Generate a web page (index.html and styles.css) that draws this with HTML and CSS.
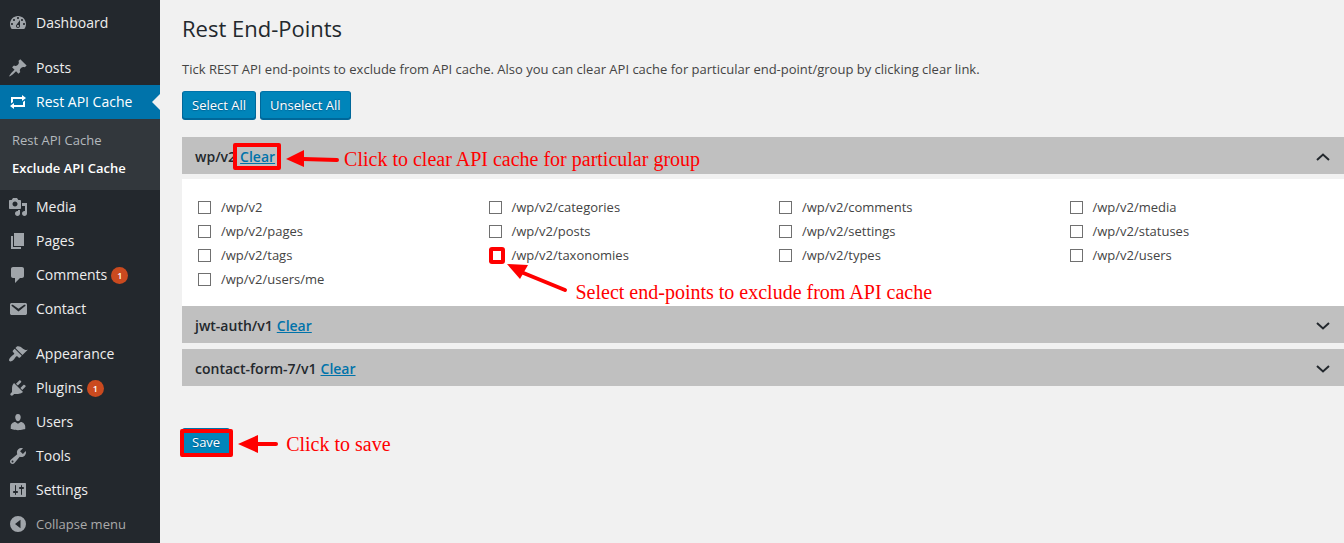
FILE: index.html
```html
<!DOCTYPE html>
<html lang="en">
<head>
<meta charset="utf-8">
<title>Rest End-Points</title>
<link rel="stylesheet" href="styles.css">
</head>
<body>
<div class="layout">
  <nav class="menu" aria-label="Main menu">
    <a class="item" href="#"><svg class="icon" viewBox="0 0 20 20"><path d="M3.76 16h12.48c1.1-1.37 1.76-3.11 1.76-5 0-4.42-3.58-8-8-8s-8 3.58-8 8c0 1.89.66 3.63 1.76 5zM10 4c.55 0 1 .45 1 1s-.45 1-1 1-1-.45-1-1 .45-1 1-1zM6 6c.55 0 1 .45 1 1s-.45 1-1 1-1-.45-1-1 .45-1 1-1zm8 0c.55 0 1 .45 1 1s-.45 1-1 1-1-.45-1-1 .45-1 1-1zm-5.37 5.55L12 7v6c0 1.1-.9 2-2 2s-2-.9-2-2c0-.57.24-1.08.63-1.45zM4 10c.55 0 1 .45 1 1s-.45 1-1 1-1-.45-1-1 .45-1 1-1zm12 0c.55 0 1 .45 1 1s-.45 1-1 1-1-.45-1-1 .45-1 1-1zm-5 3c0-.55-.45-1-1-1s-1 .45-1 1 .45 1 1 1 1-.45 1-1z"/></svg>Dashboard</a>
    <a class="item group-start" href="#"><svg class="icon" viewBox="0 0 20 20"><path d="M10.44 3.02l1.82-1.82 6.36 6.35-1.83 1.82c-1.05-.68-2.48-.57-3.41.36l-.75.75c-.92.93-1.04 2.35-.35 3.41l-1.83 1.82-2.41-2.41-2.8 2.79c-.42.42-3.38 2.71-3.8 2.29s1.86-3.39 2.28-3.81l2.79-2.79L4.1 9.36l1.83-1.82c1.05.69 2.48.57 3.4-.36l.75-.75c.93-.92 1.05-2.35.36-3.41z"/></svg>Posts</a>
    <a class="item current" href="#"><svg class="icon" viewBox="0 0 20 20"><path d="M5 7v3l-2 1.500V5h11V3l4 3.010L14 9V7H5zm10 6v-3l2-1.500V15H6v2l-4-3.010L6 11v2h9z"/></svg>Rest API Cache</a>
    <div class="submenu">
      <a class="subitem" href="#">Rest API Cache</a>
      <a class="subitem active" href="#" aria-current="page">Exclude API Cache</a>
    </div>
    <a class="item" href="#"><svg class="icon" viewBox="0 0 20 20"><path d="M13 11V4c0-.55-.45-1-1-1h-1.670L9 1H5L3.670 3H2c-.55 0-1 .45-1 1v7c0 .55.45 1 1 1h10c.55 0 1-.45 1-1zM7 4.500c1.380 0 2.500 1.120 2.500 2.500S8.380 9.500 7 9.500 4.500 8.380 4.500 7 5.620 4.500 7 4.500zM14 6h5v10.500c0 1.380-1.120 2.500-2.500 2.500S14 17.880 14 16.500s1.120-2.500 2.500-2.500c.17 0 .34.02.5.05V9h-3V6zm-4 8.050V13h2v3.500c0 1.380-1.120 2.500-2.500 2.500S7 17.880 7 16.500 8.120 14 9.500 14c.17 0 .34.02.5.05z"/></svg>Media</a>
    <a class="item" href="#"><svg class="icon" viewBox="0 0 20 20"><path d="M6 15V2h10v13H6zm-1 1h8v2H3V5h2v11z"/></svg>Pages</a>
    <a class="item" href="#"><svg class="icon" viewBox="0 0 20 20"><path d="M5 2h9c1.100 0 2 .9 2 2v7c0 1.100-.9 2-2 2h-2l-5 5v-5H5c-1.100 0-2-.9-2-2V4c0-1.100.9-2 2-2z"/></svg>Comments<span class="count">1</span></a>
    <a class="item" href="#"><svg class="icon" viewBox="0 0 20 20"><path d="M3.870 4h13.250C18.370 4 19 4.590 19 5.790v8.420c0 1.190-.63 1.790-1.880 1.790H3.870c-1.250 0-1.880-.6-1.880-1.790V5.790c0-1.200.63-1.790 1.880-1.790zm6.620 8.600l6.740-5.530c.24-.2.43-.66.13-1.070-.29-.41-.82-.42-1.170-.17l-5.700 3.860L4.800 5.830c-.35-.25-.88-.24-1.170.17-.3.41-.11.87.13 1.070z"/></svg>Contact</a>
    <a class="item group-start" href="#"><svg class="icon" viewBox="0 0 20 20"><path d="M14.480 11.060L7.410 3.990l1.500-1.500c.5-.56 2.300-.47 3.510.32 1.210.8 1.430 1.280 2.910 2.100 1.180.64 2.450 1.260 4.450.85zm-.71.71L6.700 4.700 4.930 6.470c-.39.39-.39 1.020 0 1.410l1.060 1.060c.39.39.39 1.030 0 1.420-.6.6-1.430 1.110-2.210 1.690-.35.26-.7.53-1.010.84C1.430 14.230.4 16.080 1.400 17.070c.99 1 2.840-.03 4.180-1.360.31-.31.58-.66.85-1.020.57-.78 1.080-1.610 1.690-2.210.39-.39 1.020-.39 1.410 0l1.060 1.060c.39.39 1.020.39 1.410 0z"/></svg>Appearance</a>
    <a class="item" href="#"><svg class="icon" viewBox="0 0 20 20"><path d="M13.110 4.360L9.870 7.600 8 5.730l3.240-3.240c.35-.34 1.050-.2 1.560.32.52.51.66 1.210.31 1.550zm-8 1.770l.91-1.120 9.010 9.010-1.190.84c-.71.71-2.630 1.160-3.820 1.160H6.140L4.900 17.260c-.59.59-1.540.59-2.120 0-.59-.58-.59-1.530 0-2.120l1.240-1.240v-3.880c0-1.130.4-3.190 1.090-3.890zm7.260 3.970l3.240-3.240c.34-.35 1.040-.21 1.550.31.52.51.66 1.210.31 1.550l-3.240 3.250z"/></svg>Plugins<span class="count">1</span></a>
    <a class="item" href="#"><svg class="icon" viewBox="0 0 20 20"><path d="M10 9.250c-2.270 0-2.730-3.440-2.730-3.440C7 4.020 7.820 2 9.970 2c2.160 0 2.980 2.020 2.710 3.810 0 0-.41 3.440-2.680 3.440zm0 2.570L12.720 10c2.390 0 4.520 2.330 4.520 4.530v2.490s-3.650 1.130-7.240 1.130c-3.650 0-7.240-1.130-7.240-1.130v-2.490c0-2.250 1.940-4.480 4.470-4.480z"/></svg>Users</a>
    <a class="item" href="#"><svg class="icon" viewBox="0 0 20 20"><path d="M16.680 9.770c-1.340 1.340-3.300 1.670-4.950.99l-5.410 6.520c-.99.99-2.590.99-3.580 0s-.99-2.590 0-3.570l6.520-5.420c-.68-1.650-.35-3.610.99-4.950 1.280-1.280 3.120-1.620 4.720-1.060l-2.890 2.890 2.820 2.820 2.860-2.870c.53 1.580.18 3.390-1.080 4.650zM3.810 16.210c.4.39 1.040.39 1.430 0 .4-.4.4-1.040 0-1.430-.39-.4-1.030-.4-1.430 0-.39.39-.39 1.030 0 1.430z"/></svg>Tools</a>
    <a class="item" href="#"><svg class="icon" viewBox="0 0 20 20"><path d="M18 16V4c0-.55-.45-1-1-1H3c-.55 0-1 .45-1 1v12c0 .55.45 1 1 1h14c.55 0 1-.45 1-1zM8 11h1c.55 0 1 .45 1 1s-.45 1-1 1H8v1.500c0 .28-.22.5-.5.5s-.5-.22-.5-.5V13H6c-.55 0-1-.45-1-1s.45-1 1-1h1V5.500c0-.28.22-.5.5-.5s.5.22.5.5V11zm5-2h-1c-.55 0-1-.45-1-1s.45-1 1-1h1V5.500c0-.28.22-.5.5-.5s.5.22.5.5V7h1c.55 0 1 .45 1 1s-.45 1-1 1h-1v5.500c0 .28-.22.5-.5.5s-.5-.22-.5-.5V9z"/></svg>Settings</a>
    <button class="item collapse" type="button"><svg class="icon" viewBox="0 0 20 20"><path fill-rule="evenodd" d="M10 2a8 8 0 1 0 0 16a8 8 0 0 0 0-16zM12.500 5.800v8.400L7 10z"/></svg>Collapse menu</button>
  </nav>

  <main class="content">
    <h1 class="title">Rest End-Points</h1>
    <p class="intro">Tick REST API end-points to exclude from API cache. Also you can clear API cache for particular end-point/group by clicking clear link.</p>
    <div class="actions">
      <button class="button" type="button">Select All</button>
      <button class="button" type="button">Unselect All</button>
    </div>

    <form class="groups">
      <section class="group">
        <h2 class="bar">wp/v2
          <span class="marked mark-link"><a href="#">Clear</a>
            <span class="note"><svg class="arrow" width="54" height="20" viewBox="0 0 54 20"><path d="M17 10L51 11" stroke-width="4" stroke-linecap="round"/><path class="head" d="M0 10L18 1V18z"/></svg>Click to clear API cache for particular group</span>
          </span>
          <svg class="chevron" viewBox="0 0 14 8"><path d="M1 7L7 1.500L13 7"/></svg>
        </h2>
        <div class="options">
          <label class="option"><input type="checkbox">/wp/v2</label>
          <label class="option"><input type="checkbox">/wp/v2/categories</label>
          <label class="option"><input type="checkbox">/wp/v2/comments</label>
          <label class="option"><input type="checkbox">/wp/v2/media</label>
          <label class="option"><input type="checkbox">/wp/v2/pages</label>
          <label class="option"><input type="checkbox">/wp/v2/posts</label>
          <label class="option"><input type="checkbox">/wp/v2/settings</label>
          <label class="option"><input type="checkbox">/wp/v2/statuses</label>
          <label class="option"><input type="checkbox">/wp/v2/tags</label>
          <div class="marked mark-check">
            <label class="option"><input type="checkbox">/wp/v2/taxonomies</label>
            <span class="note"><svg class="arrow" width="62" height="30" viewBox="0 0 62 30"><path d="M14 8L58 26" stroke-width="4" stroke-linecap="round"/><path class="head" d="M0 0L21 1L13 15z"/></svg>Select end-points to exclude from API cache</span>
          </div>
          <label class="option"><input type="checkbox">/wp/v2/types</label>
          <label class="option"><input type="checkbox">/wp/v2/users</label>
          <label class="option"><input type="checkbox">/wp/v2/users/me</label>
        </div>
      </section>
      <section class="group">
        <h2 class="bar">jwt-auth/v1 <a href="#">Clear</a>
          <svg class="chevron" viewBox="0 0 14 8"><path d="M1 1L7 6.500L13 1"/></svg></h2>
      </section>
      <section class="group spaced">
        <h2 class="bar">contact-form-7/v1 <a href="#">Clear</a>
          <svg class="chevron" viewBox="0 0 14 8"><path d="M1 1L7 6.500L13 1"/></svg></h2>
      </section>
      <div class="marked mark-save">
        <button class="button" type="submit">Save</button>
        <span class="note"><svg class="arrow" width="42" height="18" viewBox="0 0 42 18"><path d="M17 9H38" stroke-width="4" stroke-linecap="round"/><path class="head" d="M0 9L20 0V18z"/></svg>Click to save</span>
      </div>
    </form>
  </main>
</div>
</body>
</html>
```
FILE: styles.css
```css
*, *::after { box-sizing: border-box; }

body {
  margin: 0;
  background: #f1f1f1;
  color: #444;
  font: 13px/20px "Open Sans", "Noto Sans", sans-serif;
}

.layout { display: flex; min-height: 100vh; }

.menu {
  flex: none;
  width: 160px;
  padding-top: 6px;
  background: #23282d;
}

.item {
  position: relative;
  display: flex;
  align-items: center;
  width: 100%;
  height: 34px;
  padding: 0 8px;
  color: #eee;
  font-size: 14px;
  text-decoration: none;
}

.group-start { margin-top: 11px; }

.icon {
  flex: none;
  width: 20px;
  height: 20px;
  margin-right: 8px;
  fill: #a0a5aa;
}

.current { background: #0073aa; color: #fff; }
.current .icon { fill: #fff; }
.current::after {
  content: "";
  position: absolute;
  right: 0;
  border: 8px solid transparent;
  border-left: 0;
  border-right-color: #f1f1f1;
}

.submenu { padding: 7px 0 8px; background: #32373c; }

.subitem {
  display: block;
  padding: 4px 12px;
  color: #b4b9be;
  font-size: 13px;
  text-decoration: none;
}
.subitem.active { color: #fff; font-weight: 600; }

.count {
  width: 17px;
  height: 17px;
  margin-left: 4px;
  border-radius: 50%;
  background: #ca4a1f;
  color: #fff;
  font-size: 9px;
  font-weight: 600;
  line-height: 17px;
  text-align: center;
}

.collapse {
  border: 0;
  background: none;
  color: #aaa;
  font-family: inherit;
  font-size: 13px;
}

.content { flex: 1; padding: 14px 0 0 22px; min-width: 0; }

.title {
  margin: 0;
  color: #23282d;
  font-size: 22px;
  font-weight: 400;
  line-height: 28px;
}

.intro { margin: 17px 0 12px; }

.actions { display: flex; gap: 4px; }

.button {
  height: 28px;
  padding: 0 9px;
  border: 1px solid;
  border-color: #0073aa #006799 #006799;
  border-radius: 3px;
  background: #0085ba;
  box-shadow: 0 1px 0 #006799;
  color: #fff;
  font: inherit;
  line-height: 26px;
  text-shadow: 0 -1px 1px #006799, 0 1px 1px #006799;
}

.groups { margin-top: 18px; }

.bar {
  display: flex;
  align-items: center;
  gap: 4px;
  height: 37px;
  margin: 0;
  padding: 2px 14px 0 13px;
  background: #c0c0c0;
  color: #23282d;
  font-size: 14px;
  font-weight: 600;
}
.bar a { color: #0073aa; }

.chevron {
  width: 14px;
  height: 8px;
  margin-left: auto;
  fill: none;
  stroke: #23282d;
  stroke-width: 2;
}

.spaced { margin-top: 6px; }

.options {
  display: grid;
  grid-template-columns: repeat(4, 1fr);
  grid-auto-rows: 24px;
  margin-top: 5px;
  padding: 16px 0 15px;
  background: #fff;
}

.option {
  display: flex;
  align-items: center;
  gap: 10px;
  height: 24px;
  padding-left: 16px;
}

.option input {
  appearance: none;
  width: 13px;
  height: 13px;
  margin: 0;
  border: 1px solid #707070;
  background: #fff;
}

/* Red markers and notes drawn over the interface */
.marked { position: relative; }
.marked::after {
  content: "";
  position: absolute;
  border: 4px solid #f00;
  border-radius: 2px;
}

.note {
  position: absolute;
  display: flex;
  align-items: center;
  color: #f00;
  font: 400 20px/24px "Liberation Serif", serif;
  white-space: nowrap;
}

.arrow { flex: none; stroke: #f00; }
.arrow .head { fill: #f00; stroke: none; }

.mark-link::after { inset: -4px -6px -3px -7px; }
.mark-link .note { left: calc(100% + 11px); top: 0; gap: 4px; }

.mark-check::after { left: 16px; top: 4px; width: 16px; height: 17px; border-radius: 3px; }
.mark-check .note { left: 34px; top: 21px; gap: 7px; align-items: flex-start; line-height: 56px; }

.mark-save { width: fit-content; margin-top: 42px; }
.mark-save::after { inset: 1px -3px -1px -2px; }
.mark-save .note { left: calc(100% + 8px); top: 4px; gap: 6px; }
```
